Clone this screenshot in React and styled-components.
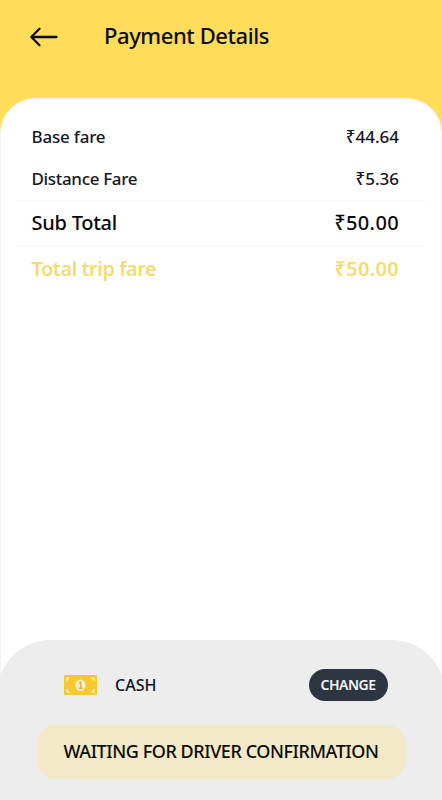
import styled, { createGlobalStyle } from "styled-components";

const fares = [
  { label: "Base fare", amount: "₹44.64", height: 43, ls: -0.2, als: 0 },
  { label: "Distance Fare", amount: "₹5.36", height: 43, ls: -0.33, als: 0, line: true },
  { label: "Sub Total", amount: "₹50.00", height: 46, ls: -0.25, als: 0.35, line: true, big: true },
  { label: "Total trip fare", amount: "₹50.00", height: 44, ls: -0.5, als: 0.3, big: true, total: true },
];

function App() {
  return (
    <>
      <GlobalStyle />
      <Screen>
        <Header>
          <BackButton aria-label="Back">
            <svg width="30" height="20" viewBox="0 0 30 20">
              <path
                d="M10.5 1.8 2.3 10 10.5 18.2M2.8 10H27.5"
                fill="none"
                stroke="#0b0b08"
                strokeWidth="2.3"
                strokeLinecap="round"
                strokeLinejoin="round"
              />
            </svg>
          </BackButton>
          <Title>Payment Details</Title>
        </Header>
        <Card>
          <FareList>
            {fares.map((fare) => (
              <FareRow
                key={fare.label}
                $height={fare.height}
                $line={fare.line}
                $big={fare.big}
                $total={fare.total}
              >
                <FareText $ls={fare.ls}>{fare.label}</FareText>
                <FareText $ls={fare.als}>{fare.amount}</FareText>
              </FareRow>
            ))}
          </FareList>
          <Footer>
            <Method>
              <CashIcon />
              <MethodName>CASH</MethodName>
              <ChangeButton>CHANGE</ChangeButton>
            </Method>
            <Waiting>WAITING FOR DRIVER CONFIRMATION</Waiting>
          </Footer>
        </Card>
      </Screen>
    </>
  );
}

function CashIcon() {
  return (
    <svg width="33" height="20" viewBox="0 0 33 20">
      <rect width="33" height="20" rx="1" fill="#f6c92f" />
      <path
        d="M2.4 2.6h4l-4 4zM30.6 2.6v4l-4-4zM2.4 17.4v-4l4 4zM30.6 17.4h-4l4-4z"
        fill="#fdf1c4"
      />
      <ellipse cx="16.4" cy="10.2" rx="5.1" ry="5.7" fill="#f8f0d2" />
      <path d="M14.7 8.2 16.8 7v6M14.7 13.3h4.2" fill="none" stroke="#dcb63a" strokeWidth="1.5" />
    </svg>
  );
}

const GlobalStyle = createGlobalStyle`
  * {
    box-sizing: border-box;
  }
  body {
    margin: 0;
    font-family: "Noto Sans", sans-serif;
    font-weight: 500;
    color: #10131c;
  }
  button {
    font: inherit;
    border: none;
    padding: 0;
  }
`;
const Screen = styled.div`
  display: flex;
  flex-direction: column;
  width: 442px;
  height: 800px;
  overflow: hidden;
  background: #ffdd59;
`;
const Header = styled.header`
  display: flex;
  align-items: flex-start;
  height: 98px;
  padding: 20px 29px 0;
`;
const BackButton = styled.button`
  display: flex;
  width: 75px;
  padding-top: 7px;
  background: none;
`;
const Title = styled.h1`
  margin: 0;
  font-size: 22px;
  font-weight: 500;
  line-height: 30px;
  letter-spacing: -0.42px;
  white-space: nowrap;
  color: #0b0b08;
`;
const Card = styled.main`
  flex: 1;
  display: flex;
  flex-direction: column;
  justify-content: space-between;
  border: 1px solid #f3f3f3;
  border-top-width: 2px;
  border-bottom: none;
  border-radius: 35px 35px 0 0;
  background: #fff;
`;
const FareList = styled.div`
  padding: 15px 14px 0 16px;
`;
const FareRow = styled.div`
  display: flex;
  align-items: center;
  justify-content: space-between;
  height: ${({ $height }) => $height}px;
  padding: 0 28px ${({ $big }) => ($big ? 2 : 1)}px 14.5px;
  border-bottom: ${({ $line }) => ($line ? "1px solid #f7f7f7" : "none")};
  font-size: ${({ $big }) => ($big ? 20 : 17)}px;
  font-weight: ${({ $total }) => ($total ? 600 : 500)};
  color: ${({ $big, $total }) => ($total ? "#f4dc70" : $big ? "#08080a" : "#151722")};
`;
const FareText = styled.span`
  letter-spacing: ${({ $ls }) => $ls}px;
  white-space: nowrap;
`;
const Footer = styled.footer`
  height: 160px;
  margin: 0 -4px;
  padding: 28px 40px 0;
  border-radius: 54px 54px 0 0;
  background: #ededed;
`;
const Method = styled.div`
  display: flex;
  align-items: center;
  height: 33px;
  padding: 0 17px 0 27px;
`;
const MethodName = styled.span`
  flex: 1;
  margin-left: 18px;
  font-size: 16px;
`;
const ChangeButton = styled.button`
  width: 79px;
  height: 32px;
  padding-right: 1px;
  border-radius: 16px;
  background: #2d3640;
  color: #f4f5f6;
  font-size: 14px;
  font-weight: 600;
  letter-spacing: -0.5px;
`;
const Waiting = styled.div`
  display: flex;
  align-items: center;
  justify-content: center;
  height: 54px;
  margin-top: 24px;
  padding-bottom: 2px;
  border-radius: 18px;
  background: #f2e9c8;
  color: #0b0b08;
  font-size: 18px;
  letter-spacing: -0.43px;
  white-space: nowrap;
`;
export default App;
